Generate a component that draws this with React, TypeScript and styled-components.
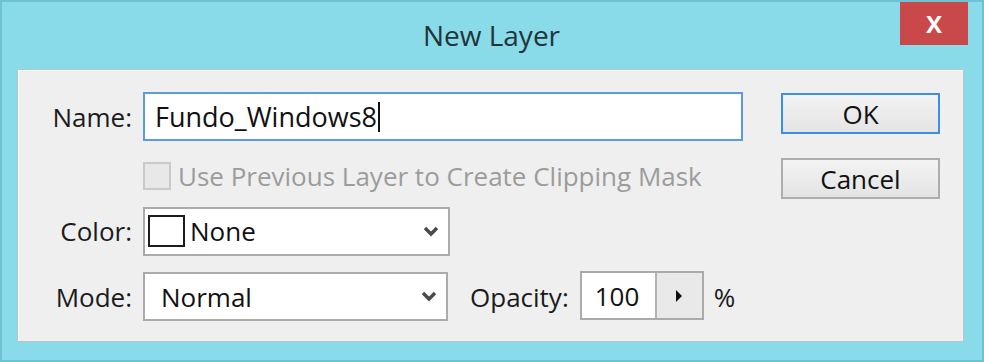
import React from 'react'
import styled, { createGlobalStyle } from 'styled-components'

const GlobalStyle = createGlobalStyle`
  html, body {
    margin: 0;
    padding: 0;
    background: #8adbea;
  }
  body {
    font-family: 'Open Sans', 'Noto Sans', sans-serif;
  }
`

const Chevron = () => (
  <svg width="16" height="11" viewBox="0 0 16 11">
    <polyline points="2,2 8,8 14,2" fill="none" stroke="#4a4a4a" strokeWidth="3.4" />
  </svg>
)

const App = () => {
  return (
    <>
      <GlobalStyle />
      <Window>
        <TitleBar>
          <Title>New Layer</Title>
          <CloseButton>x</CloseButton>
        </TitleBar>
        <Panel>
          <Form>
            <Label>Name:</Label>
            <TextField $focused>
              Fundo_Windows8
              <Caret />
            </TextField>

            <span />
            <CheckRow>
              <CheckBox />
              <DisabledText>Use Previous Layer to Create Clipping Mask</DisabledText>
            </CheckRow>

            <Label>Color:</Label>
            <Select $width={307}>
              <SelectValue>
                <Swatch />
                None
              </SelectValue>
              <Chevron />
            </Select>

            <Label>Mode:</Label>
            <ModeRow>
              <Select $width={305}>
                <SelectValue $pad={13}>Normal</SelectValue>
                <Chevron />
              </Select>
              <OpacityLabel>Opacity:</OpacityLabel>
              <Spinner>
                <SpinValue>100</SpinValue>
                <SpinArrow>
                  <svg width="8" height="12" viewBox="0 0 8 12">
                    <polygon points="1,0 7,6 1,12" fill="#111" />
                  </svg>
                </SpinArrow>
              </Spinner>
              <Percent>%</Percent>
            </ModeRow>
          </Form>
          <Buttons>
            <Button $primary>OK</Button>
            <Button>Cancel</Button>
          </Buttons>
        </Panel>
      </Window>
    </>
  )
}

export default App

const Window = styled.div`
  width: 984px;
  height: 362px;
  box-sizing: border-box;
  border: 2px solid #6ec3d3;
  background: #8adbea;
  display: flex;
  flex-direction: column;
  padding: 0 18px 18px 15px;
`

const TitleBar = styled.div`
  position: relative;
  height: 67px;
  display: flex;
  align-items: center;
  justify-content: center;
  padding-bottom: 2px;
  box-sizing: border-box;
`

const Title = styled.div`
  font-size: 28px;
  color: #23343a;
  margin-left: 2px;
`

const CloseButton = styled.div`
  position: absolute;
  top: 0;
  right: -4px;
  width: 68px;
  height: 43px;
  background: #c9484a;
  color: #fff;
  font-size: 30px;
  line-height: 1;
  font-weight: 600;
  display: flex;
  align-items: center;
  justify-content: center;
  padding-bottom: 3px;
  box-sizing: border-box;
`

const Panel = styled.div`
  flex: 1;
  background: #efefef;
  border: 1px solid #b5c7cc;
  box-shadow: inset 1px 1px 0 #fafafa;
  display: flex;
  justify-content: space-between;
  padding: 22px 23px 0 0;
`

const Form = styled.div`
  display: grid;
  grid-template-columns: 114px auto;
  grid-template-rows: 49px 32px 48px 49px;
  column-gap: 11px;
  row-gap: 17px;
  align-items: center;
`

const Label = styled.div`
  text-align: right;
  font-size: 26px;
  color: #1b1b1b;
`

const TextField = styled.div<{ $focused?: boolean }>`
  width: 600px;
  height: 49px;
  box-sizing: border-box;
  background: #fff;
  border: 2px solid ${(p) => (p.$focused ? '#5b9be0' : '#a9a9a9')};
  display: flex;
  align-items: center;
  padding-left: 10px;
  font-size: 27px;
  color: #111;
`

const Caret = styled.span`
  display: inline-block;
  width: 2px;
  height: 30px;
  background: #111;
  margin-left: 1px;
`

const CheckRow = styled.div`
  display: flex;
  align-items: center;
  gap: 7px;
  align-self: start;
`

const CheckBox = styled.div`
  width: 28px;
  height: 28px;
  box-sizing: border-box;
  border: 2px solid #c9c9c9;
  background: #e8e8e8;
`

const DisabledText = styled.div`
  font-size: 26px;
  color: #9c9c9c;
`

const Select = styled.div<{ $width: number }>`
  width: ${(p) => p.$width}px;
  height: 49px;
  box-sizing: border-box;
  background: #fff;
  border: 2px solid #ababab;
  display: flex;
  align-items: center;
  justify-content: space-between;
  padding: 0 9px 0 3px;
`

const SelectValue = styled.div<{ $pad?: number }>`
  display: flex;
  align-items: center;
  gap: 5px;
  padding-left: ${(p) => p.$pad ?? 0}px;
  font-size: 26px;
  color: #111;
`

const Swatch = styled.div`
  width: 37px;
  height: 32px;
  box-sizing: border-box;
  border: 2px solid #1d1d1d;
  background: #fff;
`

const ModeRow = styled.div`
  display: flex;
  align-items: center;
`

const OpacityLabel = styled.div`
  font-size: 26px;
  color: #1b1b1b;
  margin-left: 22px;
`

const Spinner = styled.div`
  display: flex;
  height: 49px;
  box-sizing: border-box;
  border: 2px solid #aaaaaa;
  margin-left: 11px;
  margin-top: -2px;
`

const SpinValue = styled.div`
  width: 73px;
  background: #fff;
  display: flex;
  align-items: center;
  padding-left: 13px;
  box-sizing: border-box;
  font-size: 26px;
  color: #111;
`

const SpinArrow = styled.div`
  width: 45px;
  border-left: 2px solid #b4b4b4;
  background: #e9e9e9;
  display: flex;
  align-items: center;
  justify-content: center;
`

const Percent = styled.div`
  font-size: 26px;
  color: #1b1b1b;
  margin-left: 10px;
`

const Buttons = styled.div`
  display: flex;
  flex-direction: column;
  gap: 24px;
  padding-top: 1px;
`

const Button = styled.div<{ $primary?: boolean }>`
  width: 159px;
  height: 41px;
  box-sizing: border-box;
  border: 2px solid ${(p) => (p.$primary ? '#3d8ee4' : '#adadad')};
  background: linear-gradient(#f3f3f3, #e4e4e4);
  display: flex;
  align-items: center;
  justify-content: center;
  font-size: 26px;
  color: #111;
`
